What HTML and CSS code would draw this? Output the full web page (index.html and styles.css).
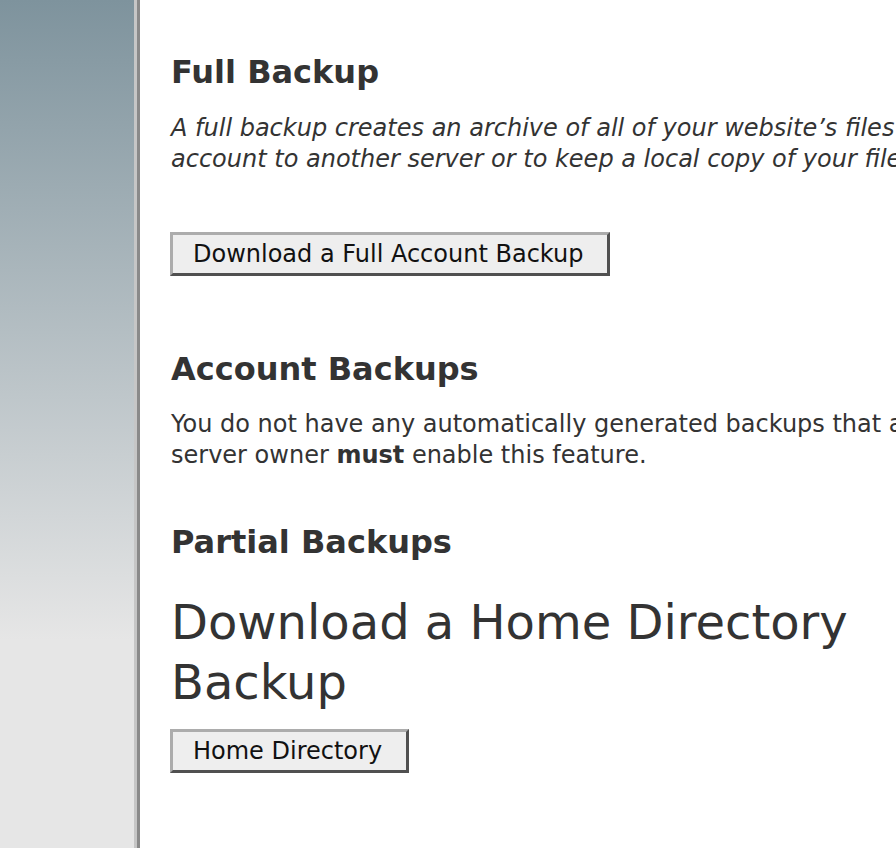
FILE: index.html
```html
<!DOCTYPE html>
<html lang="en">
<head>
    <meta charset="UTF-8">
    <meta name="viewport" content="width=device-width, initial-scale=1.0">
    <title>Backup</title>
    <link rel="stylesheet" href="styles.css">
</head>
<body>
    <div class="page">
        <div class="sidebar"></div>
        <div class="content">
            <h2>Full Backup</h2>
            <p class="note">A full backup creates an archive of all of your website’s files so you can move your account to another server or to keep a local copy of your files.</p>
            <button class="btn btn-full" data-action="full">Download a Full Account Backup</button>

            <h2 class="section">Account Backups</h2>
            <p>You do not have any automatically generated backups that are available. The server owner <b>must</b> enable this feature.</p>

            <h2 class="section">Partial Backups</h2>
            <h1>Download a Home Directory Backup</h1>
            <button class="btn" data-action="home">Home Directory</button>
        </div>
    </div>
</body>
</html>
```

FILE: styles.css
```css
body {
    margin: 0;
    overflow: hidden;
    font-family: "DejaVu Sans", Verdana, sans-serif;
    color: #333;
    background-color: #fff;
}

.page {
    display: flex;
    min-height: 100vh;
}

.sidebar {
    flex: 0 0 134px;
    background: linear-gradient(to bottom, #7e939d 0, #e6e6e6 640px, #e6e6e6 100%);
    border-right: 3px solid #c6c6c6;
}

.content {
    flex: 0 0 1000px;
    border-left: 3px solid #8a8a8a;
    padding: 0 0 0 31px;
}

h2 {
    font-size: 32px;
    font-weight: bold;
    margin: 52px 0 0;
    line-height: 40px;
}

h2.section {
    margin-top: 0;
}

p {
    font-size: 24px;
    line-height: 31px;
    margin: 20px 0 0;
}

.note {
    font-style: italic;
    margin-top: 21px;
}

h1 {
    max-width: 720px;
    font-size: 48px;
    font-weight: normal;
    line-height: 60px;
    margin: 30px 0 17px;
}

.btn {
    display: block;
    font-family: "DejaVu Sans", Verdana, sans-serif;
    font-size: 24px;
    color: #111;
    background-color: #eee;
    padding: 5px 24px 5px 20px;
    border-style: solid;
    border-width: 3px;
    border-color: #acacac #505050 #505050 #acacac;
    margin: 0 0 0 -1px;
}

.btn-full {
    margin: 57px 0 73px -1px;
}

p + h2.section {
    margin-top: 51px;
}
```
